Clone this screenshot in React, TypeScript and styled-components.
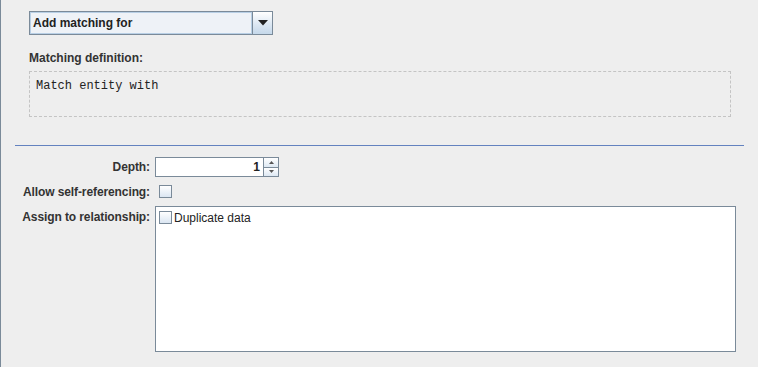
import React from 'react';
import styled, { createGlobalStyle } from 'styled-components';

const GlobalStyle = createGlobalStyle`
  html, body {
    margin: 0;
    padding: 0;
    background: #eeeeee;
  }
`;

const LABEL_FONT = `"Liberation Sans", Arial, sans-serif`;
const MONO_FONT = `"Liberation Mono", "Courier New", monospace`;
const EDGE = '#7a8a99';

const Panel = styled.div`
  height: 367px;
  box-sizing: border-box;
  border-left: 1px solid ${EDGE};
  background: #eeeeee;
  font-family: ${LABEL_FONT};
  font-size: 12px;
  color: #333333;
  overflow: hidden;
`;

const TopSection = styled.div`
  padding: 11px 0 0 28px;
  display: flex;
  flex-direction: column;
  align-items: flex-start;
`;

const Combo = styled.div`
  display: flex;
  width: 244px;
  height: 24px;
  box-sizing: border-box;
  border: 1px solid ${EDGE};
  background: #ffffff;
`;

const ComboText = styled.div`
  flex: 1;
  display: flex;
  align-items: center;
  padding-left: 3px;
  font-weight: bold;
  color: #222222;
  background: #eef2f7;
  box-shadow: inset 0 0 0 1px #b8cfe5;
`;

const ArrowButton = styled.div`
  width: 19px;
  display: flex;
  align-items: center;
  justify-content: center;
  border-left: 1px solid ${EDGE};
  background: linear-gradient(#ffffff, #dde8f3 55%, #c5d8ea);
`;

const SectionLabel = styled.div`
  margin-top: 16px;
  font-weight: bold;
  line-height: 15px;
`;

const DefinitionBox = styled.div`
  margin-top: 5px;
  width: 702px;
  height: 46px;
  box-sizing: border-box;
  border: 1px dashed #c4c4c4;
  padding: 7px 0 0 6px;
  font-family: ${MONO_FONT};
  font-size: 12px;
  color: #222222;
`;

const Separator = styled.div`
  margin: 28px 14px 0 14px;
  height: 1px;
  background: #6382bf;
`;

const Form = styled.div`
  display: grid;
  grid-template-columns: 149px auto;
  column-gap: 5px;
  row-gap: 4px;
  padding-top: 11px;
`;

const FieldLabel = styled.div<{ $top?: boolean }>`
  display: flex;
  justify-content: flex-end;
  align-items: ${(p) => (p.$top ? 'flex-start' : 'center')};
  padding-top: ${(p) => (p.$top ? '4px' : '0')};
  font-weight: bold;
  white-space: nowrap;
  letter-spacing: -0.1px;
`;

const Spinner = styled.div`
  display: flex;
  width: 124px;
  height: 20px;
`;

const SpinnerField = styled.div`
  flex: 1;
  box-sizing: border-box;
  border: 1px solid ${EDGE};
  background: #ffffff;
  display: flex;
  align-items: center;
  justify-content: flex-end;
  padding-right: 3px;
  font-weight: bold;
  color: #222222;
`;

const SpinnerButtons = styled.div`
  width: 15px;
  display: flex;
  flex-direction: column;
`;

const SpinButton = styled.div`
  flex: 1;
  box-sizing: border-box;
  border: 1px solid ${EDGE};
  border-left: none;
  &:first-child {
    border-bottom: none;
  }
  background: linear-gradient(#ffffff, #dde8f3);
  display: flex;
  align-items: center;
  justify-content: center;
`;

const CheckRow = styled.div`
  height: 21px;
  display: flex;
  align-items: center;
  padding-left: 4px;
`;

const CheckBox = styled.span`
  display: inline-block;
  width: 13px;
  height: 13px;
  box-sizing: border-box;
  border: 1px solid ${EDGE};
  background: linear-gradient(#ffffff, #dbe6f2);
`;

const ListBox = styled.div`
  width: 581px;
  height: 146px;
  box-sizing: border-box;
  border: 1px solid ${EDGE};
  background: #ffffff;
  padding: 4px 0 0 3px;
`;

const ListItem = styled.div`
  display: flex;
  align-items: center;
  gap: 2px;
  height: 13px;
  color: #222222;
`;

const Caret = ({ up }: { up: boolean }) => (
  <svg width="5" height="3" viewBox="0 0 5 3">
    <path d={up ? 'M0 3 L2.5 0 L5 3 Z' : 'M0 0 L2.5 3 L5 0 Z'} fill="#555" />
  </svg>
);

const App = () => (
  <Panel>
    <GlobalStyle />
    <TopSection>
      <Combo>
        <ComboText>Add matching for</ComboText>
        <ArrowButton>
          <svg width="10" height="6" viewBox="0 0 10 6">
            <path d="M0 0 L10 0 L5 5.5 Z" fill="#222" />
          </svg>
        </ArrowButton>
      </Combo>
      <SectionLabel>Matching definition:</SectionLabel>
      <DefinitionBox>Match entity with</DefinitionBox>
    </TopSection>
    <Separator />
    <Form>
      <FieldLabel>Depth:</FieldLabel>
      <Spinner>
        <SpinnerField>1</SpinnerField>
        <SpinnerButtons>
          <SpinButton>
            <Caret up />
          </SpinButton>
          <SpinButton>
            <Caret up={false} />
          </SpinButton>
        </SpinnerButtons>
      </Spinner>
      <FieldLabel>Allow self-referencing:</FieldLabel>
      <CheckRow>
        <CheckBox />
      </CheckRow>
      <FieldLabel $top>Assign to relationship:</FieldLabel>
      <ListBox>
        <ListItem>
          <CheckBox />
          Duplicate data
        </ListItem>
      </ListBox>
    </Form>
  </Panel>
);

export default App;
